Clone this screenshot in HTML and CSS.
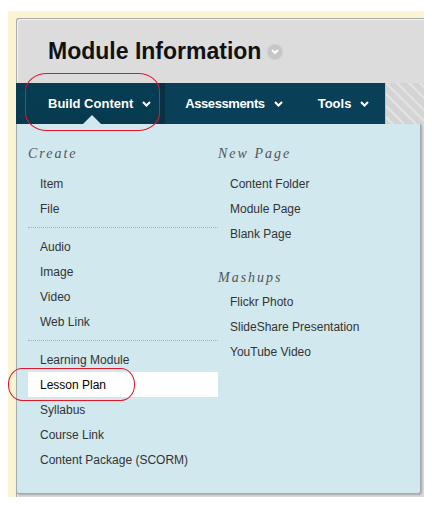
FILE: index.html
```html
<!DOCTYPE html>
<html>
<head>
<meta charset="utf-8">
<link rel="stylesheet" href="styles.css">
</head>
<body>
<div class="frame">
  <div class="panel">
    <div class="header">
      <h1 class="title">Module Information</h1>
      <span class="title-menu">
        <svg width="8" height="6" viewBox="0 0 8 6"><polyline points="1,1 4,4 7,1" fill="none" stroke="#fff" stroke-width="2"/></svg>
      </span>
    </div>
    <div class="navbar">
      <div class="nav-item build">
        <span>Build Content</span>
        <svg width="9" height="6" viewBox="0 0 9 6"><polyline points="1,1 4.5,4.5 8,1" fill="none" stroke="#fff" stroke-width="2"/></svg>
      </div>
      <div class="nav-sep"></div>
      <div class="nav-item assess">
        <span>Assessments</span>
        <svg width="9" height="6" viewBox="0 0 9 6"><polyline points="1,1 4.5,4.5 8,1" fill="none" stroke="#fff" stroke-width="2"/></svg>
      </div>
      <div class="nav-item tools">
        <span>Tools</span>
        <svg width="9" height="6" viewBox="0 0 9 6"><polyline points="1,1 4.5,4.5 8,1" fill="none" stroke="#fff" stroke-width="2"/></svg>
      </div>
      <div class="nav-fill"></div>
    </div>
    <div class="menu">
      <div class="col col-left">
        <div class="heading">Create</div>
        <div class="item">Item</div>
        <div class="item">File</div>
        <div class="divider"></div>
        <div class="item">Audio</div>
        <div class="item">Image</div>
        <div class="item">Video</div>
        <div class="item">Web Link</div>
        <div class="divider"></div>
        <div class="item">Learning Module</div>
        <div class="item active">Lesson Plan</div>
        <div class="item">Syllabus</div>
        <div class="item">Course Link</div>
        <div class="item">Content Package (SCORM)</div>
      </div>
      <div class="col col-right">
        <div class="heading">New Page</div>
        <div class="item">Content Folder</div>
        <div class="item">Module Page</div>
        <div class="item">Blank Page</div>
        <div class="heading heading-second">Mashups</div>
        <div class="item">Flickr Photo</div>
        <div class="item">SlideShare Presentation</div>
        <div class="item">YouTube Video</div>
      </div>
    </div>
  </div>
  <div class="mark mark-build"></div>
  <div class="mark mark-lesson"></div>
</div>
</body>
</html>
```
FILE: styles.css
```css
html, body {
  margin: 0;
  padding: 0;
  background: #ffffff;
}

body {
  font-family: "Liberation Sans", Arial, sans-serif;
}

.frame {
  position: relative;
  margin: 11px 0 0 8px;
  width: 416px;
  height: 486px;
  background: #fbf4d4;
  padding: 7px 0 0 8px;
  box-sizing: border-box;
  overflow: hidden;
}

.panel {
  height: 100%;
  background: #dcdcdc;
  border-top-left-radius: 3px;
  box-shadow: inset 1px 1px 0 #a9a9a9, inset 2px 2px 0 #f3f3f3;
  display: flex;
  flex-direction: column;
}

.header {
  height: 65px;
  padding: 2px 0 0 32px;
  box-sizing: border-box;
  display: flex;
  align-items: center;
  gap: 6px;
}

.title {
  margin: 0;
  font-size: 23px;
  font-weight: bold;
  line-height: 1;
  color: #111111;
}

.title-menu {
  width: 16px;
  height: 16px;
  border-radius: 50%;
  background: #c6c6c6;
  box-shadow: inset 0 0 0 1px #d2d2d2;
  display: flex;
  align-items: center;
  justify-content: center;
  margin-top: 1px;
}

.navbar {
  height: 41px;
  display: flex;
  background: #0a4057;
}

.nav-item {
  position: relative;
  display: flex;
  align-items: center;
  gap: 9px;
  font-size: 13px;
  font-weight: bold;
  color: #ffffff;
}

.build {
  padding: 0 9px 0 32px;
  background: linear-gradient(#073d53, #063a4f);
}

.build::after {
  content: "";
  position: absolute;
  left: 67px;
  bottom: 0;
  width: 0;
  height: 0;
  border-left: 9px solid transparent;
  border-right: 9px solid transparent;
  border-bottom: 9px solid #d1e8ee;
}

.nav-sep {
  width: 5px;
  background: #0a3142;
}

.assess {
  padding: 0 17px 0 20px;
  letter-spacing: -0.4px;
}

.tools {
  padding: 0 16px 0 18px;
}

.nav-fill {
  flex: 1;
  background: repeating-linear-gradient(45deg, #d4d4d4 0 4px, #e3e3e3 4px 6px, #d4d4d4 6px 8px);
  border-left: 1px solid #c4c4c4;
}

.menu {
  width: 405px;
  height: 370px;
  box-sizing: border-box;
  background: #d1e8ee;
  border: 1px solid #a3adb0;
  border-top: none;
  border-radius: 0 0 3px 3px;
  box-shadow: 1px 1px 2px rgba(0, 0, 0, 0.25);
  padding: 19px 0 0 11px;
  display: flex;
}

.col-left {
  width: 190px;
}

.col-right {
  flex: 1;
}

.heading {
  height: 20px;
  line-height: 21px;
  margin-bottom: 8px;
  font-family: "Liberation Serif", "Times New Roman", serif;
  font-style: italic;
  font-size: 14px;
  letter-spacing: 2px;
  color: #555555;
}

.heading-second {
  margin-top: 21px;
  margin-bottom: 2px;
}

.item {
  height: 25px;
  line-height: 27px;
  padding-left: 12px;
  font-size: 12px;
  color: #333333;
}

.item.active {
  background: #ffffff;
  color: #000000;
}

.divider {
  margin: 6px 0;
  border-top: 1px dotted #a7b3b7;
}

.mark {
  position: absolute;
  border: 1px solid #e2162a;
  pointer-events: none;
}

.mark-build {
  left: 17px;
  top: 62px;
  width: 135px;
  height: 58px;
  box-sizing: border-box;
  border-radius: 22px / 18px;
}

.mark-lesson {
  left: 0;
  top: 357px;
  width: 127px;
  height: 33px;
  box-sizing: border-box;
  border-radius: 14px / 16px;
}
```
